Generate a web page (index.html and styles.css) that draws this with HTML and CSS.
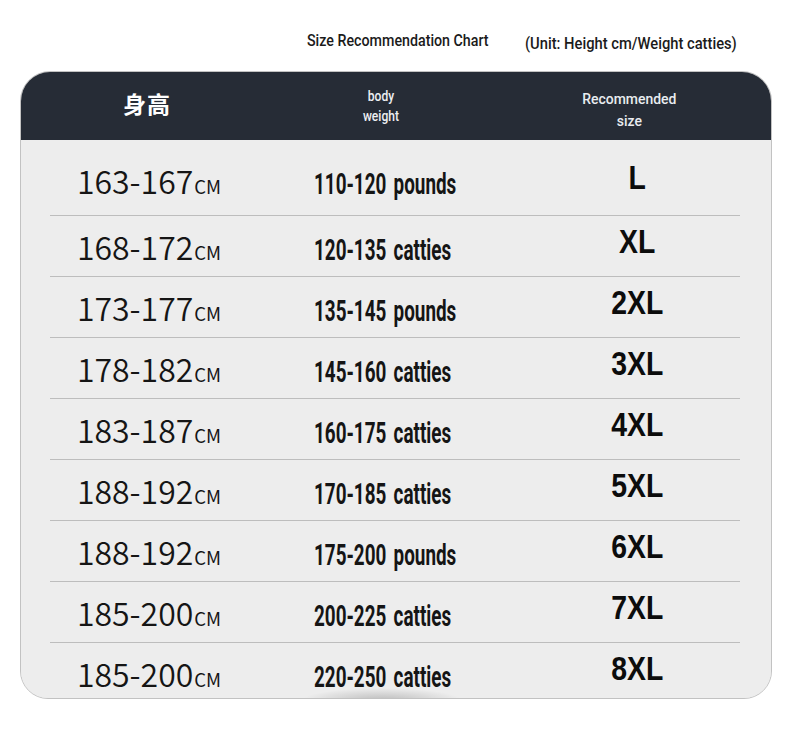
FILE: index.html
```html
<!DOCTYPE html>
<html lang="en">
<head>
<meta charset="utf-8">
<title>Size Recommendation Chart</title>
<link rel="stylesheet" href="styles.css">
</head>
<body>
<div class="page">
  <div class="title-bar">
    <div class="title-box"><span class="title">Size Recommendation Chart</span></div>
    <div class="unit-box"><span class="unit">(Unit: Height cm/Weight catties)</span></div>
  </div>
  <div class="card">
    <div class="head">
      <div class="grid">
        <div class="h-col1">身高</div>
        <div class="h-col2"><span class="cond h-small">body<br>weight</span></div>
        <div class="h-col3"><span class="cond h-rec">Recommended<br>size</span></div>
      </div>
    </div>
    <div class="body">
      <div class="grid row first">
        <div class="c1">163-167<span class="cm">CM</span></div>
        <div class="c2"><span class="cond w">110-120 pounds</span></div>
        <div class="c3"><span class="sz">L</span></div>
      </div>
      <div class="grid row">
        <div class="c1">168-172<span class="cm">CM</span></div>
        <div class="c2"><span class="cond w">120-135 catties</span></div>
        <div class="c3"><span class="sz">XL</span></div>
      </div>
      <div class="grid row">
        <div class="c1">173-177<span class="cm">CM</span></div>
        <div class="c2"><span class="cond w">135-145 pounds</span></div>
        <div class="c3"><span class="sz">2XL</span></div>
      </div>
      <div class="grid row">
        <div class="c1">178-182<span class="cm">CM</span></div>
        <div class="c2"><span class="cond w">145-160 catties</span></div>
        <div class="c3"><span class="sz">3XL</span></div>
      </div>
      <div class="grid row">
        <div class="c1">183-187<span class="cm">CM</span></div>
        <div class="c2"><span class="cond w">160-175 catties</span></div>
        <div class="c3"><span class="sz">4XL</span></div>
      </div>
      <div class="grid row">
        <div class="c1">188-192<span class="cm">CM</span></div>
        <div class="c2"><span class="cond w">170-185 catties</span></div>
        <div class="c3"><span class="sz">5XL</span></div>
      </div>
      <div class="grid row">
        <div class="c1">188-192<span class="cm">CM</span></div>
        <div class="c2"><span class="cond w">175-200 pounds</span></div>
        <div class="c3"><span class="sz">6XL</span></div>
      </div>
      <div class="grid row">
        <div class="c1">185-200<span class="cm">CM</span></div>
        <div class="c2"><span class="cond w">200-225 catties</span></div>
        <div class="c3"><span class="sz">7XL</span></div>
      </div>
      <div class="grid row last">
        <div class="c1">185-200<span class="cm">CM</span></div>
        <div class="c2 shade"><span class="cond w">220-250 catties</span></div>
        <div class="c3"><span class="sz">8XL</span></div>
      </div>
    </div>
  </div>
</div>
</body>
</html>
```

FILE: styles.css
```css
* { box-sizing: border-box; margin: 0; padding: 0; }
html, body { background: #ffffff; }
body { width: 790px; height: 739px; overflow: hidden; color: #111111; font-family: "Liberation Sans", Arial, sans-serif; }

.page { padding-top: 31px; }

.cond {
  display: inline-block;
  font-family: Roboto, "Liberation Sans", sans-serif;
  white-space: nowrap;
}

.title-bar { display: flex; height: 40px; padding-left: 307px; }
.title-box { width: 218px; line-height: 20px; }
.unit-box { padding-top: 3px; line-height: 20px; }
.title {
  display: inline-block;
  font-family: Roboto, sans-serif;
  font-weight: 500;
  font-size: 16px;
  color: #1b1b1b;
  white-space: nowrap;
  transform: scaleX(0.89);
  transform-origin: left center;
}
.unit {
  display: inline-block;
  font-family: Roboto, sans-serif;
  font-weight: 500;
  font-size: 16px;
  color: #1b1b1b;
  white-space: nowrap;
  transform: scaleX(0.92);
  transform-origin: left center;
}

.card {
  margin-left: 20px;
  width: 752px;
  height: 628px;
  border: 1px solid #c2c2c2;
  border-radius: 30px 30px 28px 28px;
  overflow: hidden;
  background: #ededed;
}

.grid {
  display: grid;
  grid-template-columns: 200px 284px 206px;
  margin: 0 31px 0 29px;
}

.head {
  background: #262c36;
  height: 68px;
  color: #ffffff;
}
.head .grid { height: 68px; align-items: center; }
.h-col1 {
  text-align: center;
  padding-right: 6px;
  padding-bottom: 6px;
  font-family: "Noto Sans CJK SC", sans-serif;
  font-weight: 700;
  font-size: 23px;
  letter-spacing: 1px;
}
.h-col2 { text-align: center; padding-right: 22px; }
.h-col3 { text-align: center; padding-right: 16px; padding-top: 8px; }
.h-small {
  font-size: 14px;
  line-height: 20px;
  font-weight: 500;
  color: #eef0f3;
  transform: scaleX(0.86);
}
.h-rec {
  font-size: 15.5px;
  line-height: 22px;
  font-weight: 500;
  color: #e9ecf0;
  transform: scaleX(0.9);
}

.body { background: #ededed; }
.row {
  height: 61px;
  align-items: center;
  border-top: 1px solid #bdbdbd;
}
.row.first { height: 75px; border-top: none; padding-top: 5px; }

.c1 {
  text-align: center;
  font-family: "Noto Sans CJK SC", sans-serif;
  font-weight: 350;
  font-size: 32px;
  color: #151515;
  white-space: nowrap;
  padding-right: 2px;
}
.cm { font-size: 18.5px; font-weight: 400; margin-left: 1px; }

.c2 { padding-left: 64px; padding-top: 8px; }
.w {
  font-size: 29px;
  line-height: 34px;
  font-weight: 700;
  word-spacing: 4px;
  color: #151515;
  transform: scaleX(0.65);
  transform-origin: left center;
}

.c3 {
  text-align: center;
  padding-bottom: 8px;
}
.sz {
  display: inline-block;
  font-family: "Liberation Sans", Arial, sans-serif;
  font-weight: 700;
  font-size: 33px;
  line-height: 36px;
  color: #0c0c0c;
  transform: scaleX(0.86);
}
.first .c3 { padding-bottom: 4px; }

.shade { position: relative; align-self: stretch; display: flex; align-items: center; }
.shade::after {
  content: "";
  position: absolute;
  left: 52px;
  bottom: 3px;
  width: 160px;
  height: 12px;
  background: radial-gradient(ellipse at 50% 100%, rgba(150,150,150,0.55), rgba(200,200,200,0) 70%);
}
```
